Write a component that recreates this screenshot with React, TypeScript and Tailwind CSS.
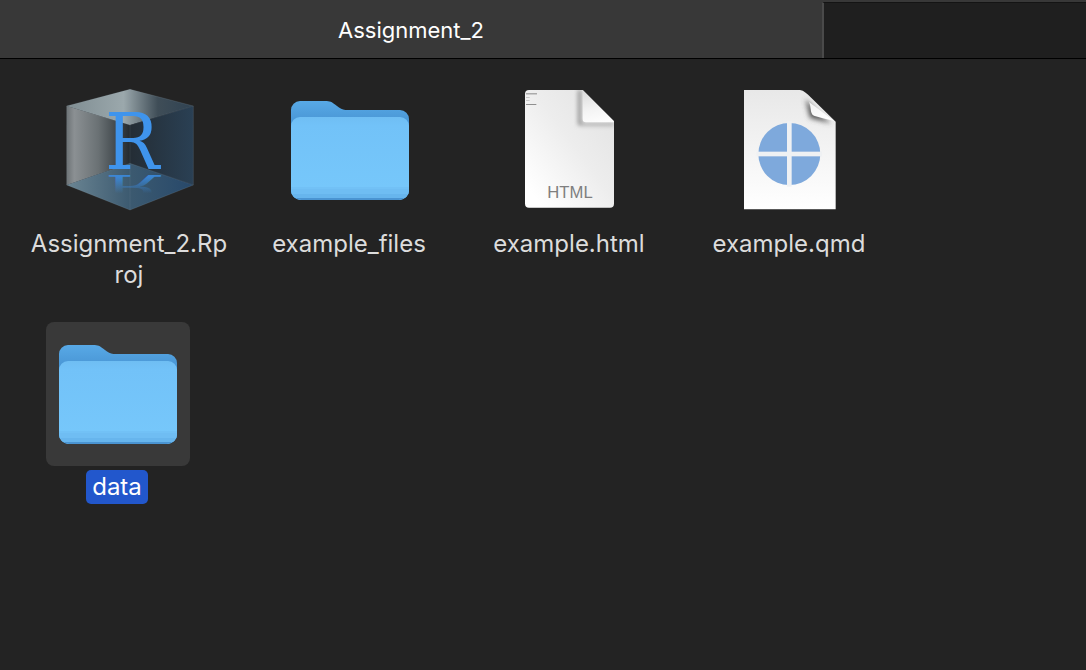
import React from "react";

const FONT = "font-['Inter','Noto_Sans',sans-serif]";

// folder drawing, 118 x 100 on a 144 tile
const FolderIcon = () => {
  const id = React.useId();
  return (
    <svg width="144" height="144" viewBox="0 0 144 144">
      <defs>
        <linearGradient id={`${id}back`} x1="0" y1="0" x2="0" y2="1">
          <stop offset="0" stopColor="#58a9e6" />
          <stop offset="0.2" stopColor="#4a97d6" />
        </linearGradient>
        <linearGradient id={`${id}front`} x1="0" y1="0" x2="0" y2="1">
          <stop offset="0" stopColor="#6fbef3" />
          <stop offset="0.1" stopColor="#72c2f8" />
          <stop offset="1" stopColor="#77c8fb" />
        </linearGradient>
        <clipPath id={`${id}clip`}>
          <path d="M0 25a9 9 0 0 1 9-9h100a9 9 0 0 1 9 9v64a10 10 0 0 1-10 10H10A10 10 0 0 1 0 89Z" />
        </clipPath>
      </defs>
      <g transform="translate(13 23)">
        <path
          d="M0 9a9 9 0 0 1 9-9h25c5 0 7 1 10 3.500l4 3c3 2 5 2.500 9 2.500h52a9 9 0 0 1 9 9v71a10 10 0 0 1-10 10H10A10 10 0 0 1 0 89Z"
          fill={`url(#${id}back)`}
        />
        <g clipPath={`url(#${id}clip)`}>
          <rect x="0" y="16" width="118" height="84" fill={`url(#${id}front)`} />
          <rect x="0" y="86" width="118" height="2" fill="#72c1f6" />
          <rect x="0" y="88" width="118" height="5" fill="#6fbdf3" />
          <rect x="0" y="93" width="118" height="4" fill="#67b5ed" />
          <rect x="0" y="97" width="118" height="3" fill="#4a94d2" />
        </g>
      </g>
    </svg>
  );
};

const RProjIcon = () => (
  <svg width="144" height="144" viewBox="0 0 432 432">
    <defs>
      <linearGradient id="cubeLeft" x1="0" y1="0" x2="1" y2="0">
        <stop offset="0" stopColor="#6d7376" />
        <stop offset="0.12" stopColor="#8b9093" />
        <stop offset="0.5" stopColor="#6a7174" />
        <stop offset="1" stopColor="#232a2f" />
      </linearGradient>
      <linearGradient id="cubeTop" x1="0" y1="0" x2="1" y2="0">
        <stop offset="0" stopColor="#7f8d92" />
        <stop offset="0.45" stopColor="#9ba8ac" />
        <stop offset="0.72" stopColor="#3f4d57" />
        <stop offset="1" stopColor="#2f4252" />
      </linearGradient>
      <linearGradient id="cubeRight" x1="0" y1="0" x2="1" y2="0">
        <stop offset="0" stopColor="#242d35" />
        <stop offset="1" stopColor="#2a4054" />
      </linearGradient>
      <linearGradient id="cubeFloor" x1="0" y1="0" x2="1" y2="0">
        <stop offset="0" stopColor="#6b8593" />
        <stop offset="0.5" stopColor="#3c5a70" />
        <stop offset="1" stopColor="#27486a" />
      </linearGradient>
      <linearGradient id="rMirror" x1="0" y1="0" x2="0" y2="1">
        <stop offset="0.3" stopColor="#3a8de4" stopOpacity="0" />
        <stop offset="0.75" stopColor="#3a8de4" stopOpacity="0.85" />
      </linearGradient>
    </defs>
    <path d="M26 84 216 141V256L26 321Z" fill="url(#cubeLeft)" />
    <path d="M216 34 406 84 216 141 26 84Z" fill="url(#cubeTop)" />
    <path d="M216 141 406 84V321L216 256Z" fill="url(#cubeRight)" />
    <path d="M26 321 216 256 406 321 216 396Z" fill="url(#cubeFloor)" />
    <path d="M216 34V396" stroke="#8fa6b3" strokeOpacity="0.2" strokeWidth="2" />
    <path d="M26 84 216 141 406 84M26 321 216 256 406 321" stroke="#9fb6c4" strokeOpacity="0.18" strokeWidth="2" fill="none" />
    <path d="M216 34 406 84V321L216 396 26 321V84Z" stroke="#a7bcc8" strokeOpacity="0.22" strokeWidth="2" fill="none" />
    <g transform="translate(18 0) scale(0.92 1)">
      <text
        x="222"
        y="273"
        textAnchor="middle"
        fontFamily="'DejaVu Serif', serif"
        fontSize="235"
        fill="#3f94ec"
      >
        R
      </text>
    </g>
    <g transform="translate(18 400) scale(0.92 -0.4)">
      <text
        x="222"
        y="273"
        textAnchor="middle"
        fontFamily="'DejaVu Serif', serif"
        fontSize="235"
        fill="url(#rMirror)"
      >
        R
      </text>
    </g>
  </svg>
);

const HtmlIcon = () => (
  <svg width="144" height="144" viewBox="0 0 432 432">
    <defs>
      <linearGradient id="htmlPage" x1="0.9" y1="0.1" x2="0.1" y2="0.9">
        <stop offset="0" stopColor="#e4e4e4" />
        <stop offset="0.45" stopColor="#ededed" />
        <stop offset="1" stopColor="#ffffff" />
      </linearGradient>
      <linearGradient id="htmlFold" x1="0.3" y1="0" x2="0.5" y2="1">
        <stop offset="0" stopColor="#dcdcdc" />
        <stop offset="0.6" stopColor="#f4f4f4" />
        <stop offset="1" stopColor="#fdfdfd" />
      </linearGradient>
      <filter id="htmlShade" x="-30%" y="-30%" width="160%" height="160%">
        <feGaussianBlur stdDeviation="7" />
      </filter>
      <clipPath id="htmlClip">
        <path d="M93 36H254L348 130V377a12 12 0 0 1-12 12H93a12 12 0 0 1-12-12V48a12 12 0 0 1 12-12Z" />
      </clipPath>
    </defs>
    <path
      d="M93 36H254L348 130V377a12 12 0 0 1-12 12H93a12 12 0 0 1-12-12V48a12 12 0 0 1 12-12Z"
      fill="url(#htmlPage)"
    />
    <g clipPath="url(#htmlClip)">
      <path d="M250 36V136H348V142H240V36Z" fill="#8c8c8c" filter="url(#htmlShade)" />
    </g>
    <path d="M254 36 347 129V133H264a10 10 0 0 1-10-10Z" fill="url(#htmlFold)" />
    <rect x="84" y="46" width="33" height="3" fill="#8a8a8a" />
    <rect x="84" y="57" width="11" height="2" fill="#b5b5b5" />
    <rect x="84" y="67" width="11" height="2" fill="#b5b5b5" />
    <rect x="84" y="78" width="31" height="3" fill="#8f8f8f" />
    <text
      x="216"
      y="359"
      textAnchor="middle"
      fontFamily="'Liberation Sans', sans-serif"
      fontSize="50"
      fill="#7f7f7f"
    >
      HTML
    </text>
  </svg>
);

const QmdIcon = () => (
  <svg width="144" height="144" viewBox="0 0 432 432">
    <defs>
      <linearGradient id="qmdPage" x1="0" y1="0" x2="0" y2="1">
        <stop offset="0" stopColor="#e8e8e8" />
        <stop offset="1" stopColor="#ffffff" />
      </linearGradient>
      <linearGradient id="qmdFold" x1="0.2" y1="0" x2="0.6" y2="1">
        <stop offset="0" stopColor="#f2f2f2" />
        <stop offset="1" stopColor="#ffffff" />
      </linearGradient>
      <filter id="qmdShade" x="-40%" y="-40%" width="180%" height="180%">
        <feGaussianBlur stdDeviation="8" />
      </filter>
      <clipPath id="qmdClip">
        <path d="M78 36H246C258 38 266 46 278 58L353 131V394H78Z" />
      </clipPath>
    </defs>
    <path d="M78 36H246C258 38 266 46 278 58L353 131V394H78Z" fill="url(#qmdPage)" />
    <g clipPath="url(#qmdClip)">
      <path d="M262 62 276 120 340 136 300 104Z" fill="#555" filter="url(#qmdShade)" />
    </g>
    <path
      d="M273 72 348 128C322 124 304 118 290 114 281 111 279 102 278 92 277 84 276 78 273 72Z"
      fill="url(#qmdFold)"
    />
    <circle cx="214" cy="228" r="93" fill="#7ea9dc" />
    <rect x="207" y="130" width="14" height="196" fill="#eff1f3" />
    <rect x="116" y="221" width="196" height="14" fill="#eff1f3" />
  </svg>
);

const files = [
  { name: "Assignment_2.Rproj", icon: <RProjIcon /> },
  { name: "example_files", icon: <FolderIcon /> },
  { name: "example.html", icon: <HtmlIcon /> },
  { name: "example.qmd", icon: <QmdIcon /> },
];

export default function App() {
  return (
    <div className={`h-[670px] w-[1086px] overflow-hidden bg-[#232323] ${FONT}`}>
      <div className="flex h-[59px] border-b border-black bg-[#383838]">
        <div className="flex w-[822px] items-center justify-center pt-[2px] text-[22px] text-white">
          Assignment_2
        </div>
        <div className="mt-[2px] flex-1 border-t border-l-2 border-t-[#141414] border-l-[#4a4a4a] bg-[#1f1f1f]" />
      </div>

      <div className="flex pl-[20px] pt-[19px]">
        {files.map((f) => (
          <div key={f.name} className="flex w-[220px] flex-col items-center">
            <div className="h-[144px] w-[144px]">{f.icon}</div>
            <div className="mr-[2px] mt-[6px] w-[200px] break-all text-center text-[24px] leading-[31px] text-[#dcdcdc]">
              {f.name}
            </div>
          </div>
        ))}
      </div>

      <div className="ml-[46px] mt-[32px] flex w-[144px] flex-col items-center">
        <div className="h-[144px] w-[144px] rounded-[8px] bg-[#393939]">
          <FolderIcon />
        </div>
        <div className="mr-[2px] mt-[4px] flex h-[34px] items-center rounded-[5px] bg-[#2257cc] px-[6px] text-[24px] text-white">
          data
        </div>
      </div>
    </div>
  );
}
